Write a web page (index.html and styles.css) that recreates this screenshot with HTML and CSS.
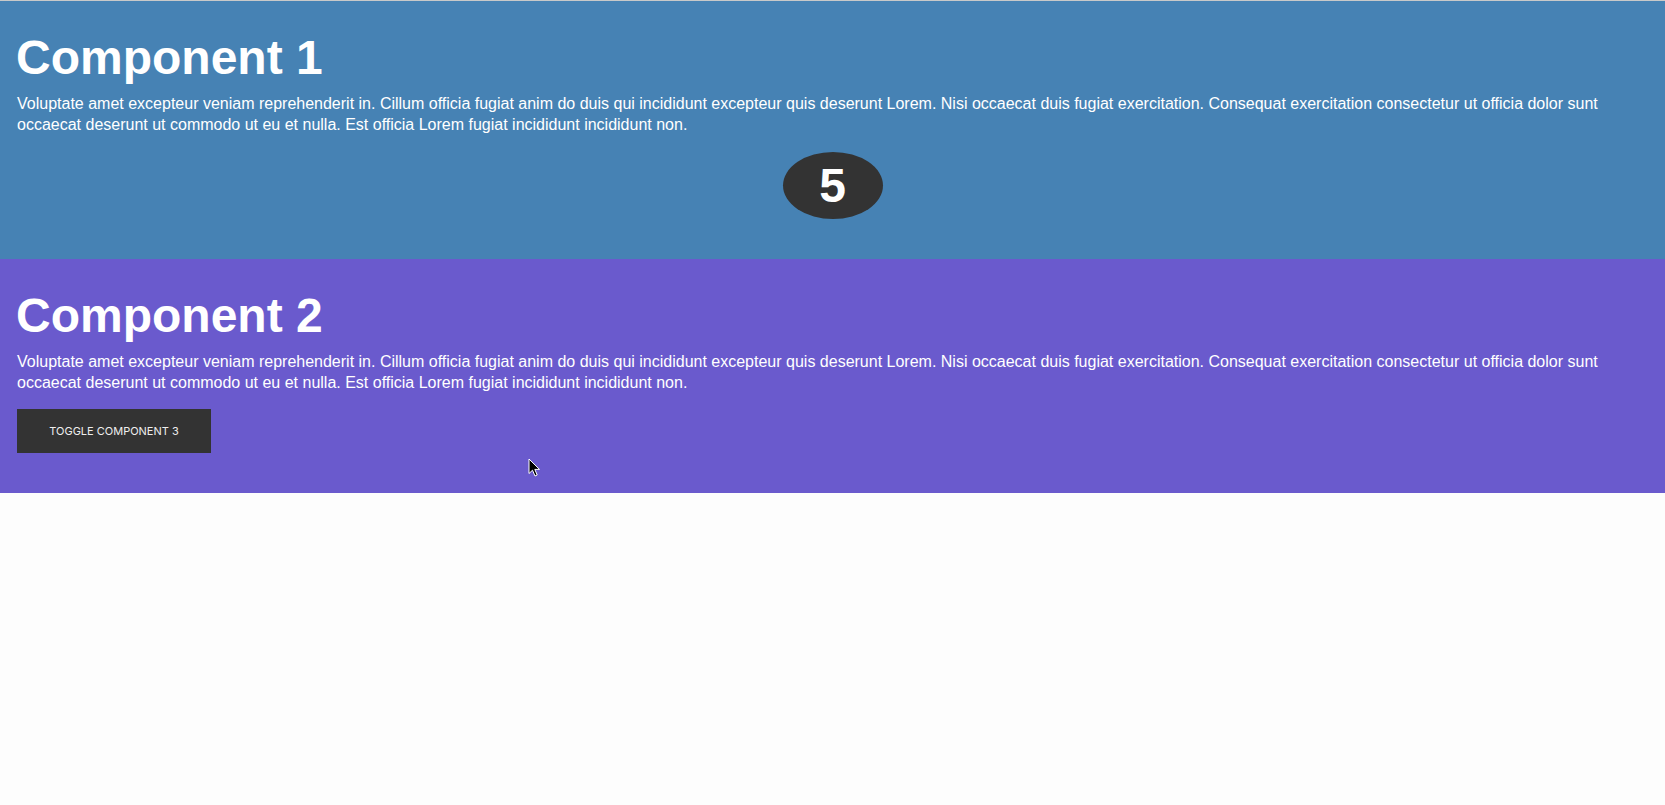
FILE: index.html
```html
<!DOCTYPE html>
<html lang="en">
<head>
<meta charset="utf-8">
<title>Components</title>
<link rel="stylesheet" href="styles.css">
</head>
<body>
<section class="comp comp-one">
  <h1 class="comp-title">Component 1</h1>
  <p class="comp-text">Voluptate amet excepteur veniam reprehenderit in. Cillum officia fugiat anim do duis qui incididunt excepteur quis deserunt Lorem. Nisi occaecat duis fugiat exercitation. Consequat exercitation consectetur ut officia dolor sunt occaecat deserunt ut commodo ut eu et nulla. Est officia Lorem fugiat incididunt incididunt non.</p>
  <div class="counter-row">
    <div class="counter">5</div>
  </div>
</section>
<section class="comp comp-two">
  <h1 class="comp-title">Component 2</h1>
  <p class="comp-text">Voluptate amet excepteur veniam reprehenderit in. Cillum officia fugiat anim do duis qui incididunt excepteur quis deserunt Lorem. Nisi occaecat duis fugiat exercitation. Consequat exercitation consectetur ut officia dolor sunt occaecat deserunt ut commodo ut eu et nulla. Est officia Lorem fugiat incididunt incididunt non.</p>
  <div class="btn-row">
    <button class="toggle-btn" type="button">Toggle Component 3</button>
  </div>
</section>
<svg class="cursor" width="13" height="20" viewBox="0 0 13 20" aria-hidden="true">
  <path d="M1 1 L1 15.5 L4.5 12.2 L7 18 L9.2 17 L6.8 11.4 L11.5 11.4 Z" fill="#000" stroke="#fff" stroke-width="1" stroke-linejoin="round"/>
</svg>
</body>
</html>
```

FILE: styles.css
```css
html, body {
  margin: 0;
  padding: 0;
}

body {
  background: #fdfdfd;
  border-top: 1px solid #c9c9c9;
  font-family: "Liberation Sans", Arial, sans-serif;
  color: #fff;
  position: relative;
  min-height: 804px;
}

.comp {
  padding: 29px 17px 40px 17px;
}

.comp-one {
  background: #4682b4;
}

.comp-two {
  background: #6a5acd;
}

.comp-title {
  margin: 0 0 8px -1px;
  font-size: 48px;
  line-height: 55px;
  font-weight: 700;
}

.comp-text {
  margin: 0;
  font-size: 16px;
  line-height: 21px;
}

.counter-row {
  display: flex;
  justify-content: center;
  margin-top: 17px;
}

.counter {
  width: 100px;
  height: 67px;
  border-radius: 50%;
  background: #333;
  color: #fff;
  font-size: 48px;
  font-weight: 700;
  display: flex;
  align-items: center;
  justify-content: center;
}

.btn-row {
  display: flex;
  margin-top: 16px;
}

.toggle-btn {
  background: #333;
  color: #eee;
  border: none;
  border-radius: 0;
  width: 194px;
  height: 44px;
  padding: 0;
  font-family: Inter, "Noto Sans", sans-serif;
  font-size: 11px;
  letter-spacing: 0;
  text-transform: uppercase;
  cursor: pointer;
}

.cursor {
  position: absolute;
  left: 528px;
  top: 457px;
}
```
